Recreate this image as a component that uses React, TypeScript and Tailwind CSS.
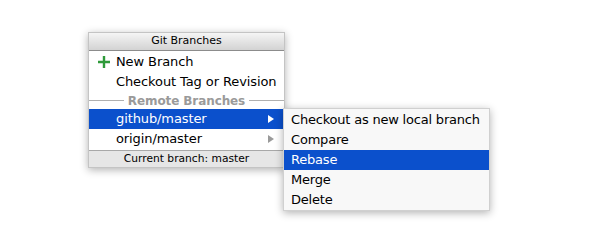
import React from "react";

const font = { fontFamily: '"DejaVu Sans", "Liberation Sans", sans-serif' };

const Arrow = ({ color }: { color: string }) => (
  <svg width="6" height="8" viewBox="0 0 6 8" className="shrink-0">
    <path d="M0 0 L6 4 L0 8 Z" fill={color} />
  </svg>
);

const PlusIcon = () => (
  <svg width="14" height="14" viewBox="0 0 14 14" className="shrink-0">
    <path d="M7 1 V13 M1 7 H13" stroke="#2f9a3a" strokeWidth="2.4" />
  </svg>
);

const subItems = ["Checkout as new local branch", "Compare", "Rebase", "Merge", "Delete"];

const App = () => {
  return (
    <div className="w-[600px] h-[250px] bg-white text-black" style={font}>
      <div className="relative ml-[88px] pt-[32px] w-[197px]">
        <div className="w-[197px] h-[136px] bg-white border border-[#c4c4c4] shadow-[0_2px_8px_rgba(0,0,0,0.3)] flex flex-col">
          <div className="h-[18px] flex items-center justify-center text-[11px] bg-gradient-to-b from-[#f5f5f5] to-[#d3d3d3] border-b border-[#8c8c8c]">
            Git Branches
          </div>
          <div className="pt-[1px] flex flex-col text-[13px] tracking-[-0.1px]">
            <div className="h-[20px] flex items-center pl-[8px] gap-[5px]">
              <PlusIcon />
              <span>New Branch</span>
            </div>
            <div className="h-[20px] flex items-center pl-[27px]">Checkout Tag or Revision</div>
            <div className="h-[17px] flex items-center gap-[4px]">
              <div className="flex-1 h-px bg-[#b0b0b0]" />
              <span className="font-bold text-[#9a9a9a] text-[12px]">Remote Branches</span>
              <div className="flex-1 h-px bg-[#b0b0b0]" />
            </div>
            <div className="h-[20px] flex items-center justify-between pl-[27px] pr-[10px] bg-[#0b50cc] text-white">
              <span>github/master</span>
              <Arrow color="#ffffff" />
            </div>
            <div className="h-[20px] flex items-center justify-between pl-[27px] pr-[10px]">
              <span>origin/master</span>
              <Arrow color="#9a9a9a" />
            </div>
          </div>
          <div className="mt-auto h-[17px] flex items-center justify-center text-[10.7px] bg-[#e6e6e6] border-t border-[#a8a8a8]">
            Current branch: master
          </div>
        </div>
        <div className="absolute left-[195px] top-[108px] w-[207px] bg-[#f8f8f8] border border-[#d0d0d0] shadow-[0_2px_8px_rgba(0,0,0,0.3)] pt-[1px] flex flex-col text-[13px] tracking-[-0.2px]">
          {subItems.map((s) => (
            <div
              key={s}
              className={
                s === "Rebase"
                  ? "h-[20px] flex items-center pl-[7px] bg-[#0b50cc] text-white"
                  : "h-[20px] flex items-center pl-[7px]"
              }
            >
              {s}
            </div>
          ))}
        </div>
      </div>
    </div>
  );
};

export default App;
